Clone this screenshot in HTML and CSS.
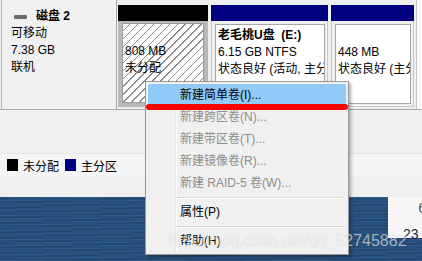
FILE: index.html
```html
<!DOCTYPE html>
<html lang="zh-CN">
<head>
    <meta charset="UTF-8">
    <title>磁盘管理</title>
    <link rel="stylesheet" href="styles.css">
</head>
<body>

    <div class="window">
        <div class="disk-row">
            <div class="disk-label">
                <div class="disk-title"><span class="disk-icon"></span><b>磁盘 2</b></div>
                <div>可移动</div>
                <div>7.38 GB</div>
                <div>联机</div>
            </div>
            <div class="partitions">
                <div class="part part-free selected">
                    <div class="part-head"></div>
                    <div class="part-body">
                        <div class="part-box">
                            <div>&nbsp;</div>
                            <div>808 MB</div>
                            <div>未分配</div>
                        </div>
                    </div>
                </div>
                <div class="part part-e">
                    <div class="part-head"></div>
                    <div class="part-body">
                        <div class="part-box">
                            <div><b>老毛桃U盘&nbsp; (E:)</b></div>
                            <div>6.15 GB NTFS</div>
                            <div>状态良好 (活动, 主分区)</div>
                        </div>
                    </div>
                </div>
                <div class="part part-3">
                    <div class="part-head"></div>
                    <div class="part-body">
                        <div class="part-box">
                            <div>&nbsp;</div>
                            <div>448 MB</div>
                            <div>状态良好 (主分区)</div>
                        </div>
                    </div>
                </div>
            </div>
            <div class="scroll"></div>
        </div>

        <div class="legend">
            <span class="swatch swatch-free"></span><span>未分配</span>
            <span class="swatch swatch-primary"></span><span>主分区</span>
        </div>
    </div>

    <div class="desktop">
        <div class="peek">
            <div class="peek-top">6</div>
            <div class="peek-date">23 -</div>
        </div>
    </div>

    <!-- context menu over the disk view -->
    <div class="menu">
        <div class="menu-item active">新建简单卷(I)...</div>
        <div class="menu-item disabled">新建跨区卷(N)...</div>
        <div class="menu-item disabled">新建带区卷(T)...</div>
        <div class="menu-item disabled">新建镜像卷(R)...</div>
        <div class="menu-item disabled">新建 RAID-5 卷(W)...</div>
        <div class="menu-sep"></div>
        <div class="menu-item">属性(P)</div>
        <div class="menu-sep"></div>
        <div class="menu-item">帮助(H)</div>
    </div>

    <div class="mark"></div>
    <div class="watermark">http://blog.csdn.net/qq_52745882</div>

</body>
</html>
```

FILE: styles.css
```css
body {
    margin: 0;
    width: 422px;
    height: 261px;
    overflow: hidden;
    position: relative;
    font-family: "Liberation Sans", "Noto Sans CJK SC", sans-serif;
    font-size: 12px;
    color: #000;
    background: #234d7c;
}

.window {
    height: 197px;
    background: #f0f0f0;
    display: flex;
    flex-direction: column;
}

.disk-row {
    height: 109px;
    display: flex;
    border-bottom: 1px solid #a9a9a9;
}

.disk-label {
    margin-left: 1px;
    width: 105px;
    padding: 8px 0 0 9px;
    border-left: 1px solid #b5b5b5;
    border-right: 1px solid #a9a9a9;
    line-height: 17px;
}

.disk-title {
    display: flex;
    align-items: center;
}

.disk-icon {
    width: 13px;
    height: 4px;
    margin: 0 9px 0 3px;
    background: #6b6b6b;
    border-radius: 1px;
}

.partitions {
    display: flex;
    gap: 3px;
    margin-left: 1px;
    padding-top: 5px;
}

.part {
    display: flex;
    flex-direction: column;
}

.part-free { width: 90px; }
.part-e { width: 117px; }
.part-3 { width: 83px; }

.part-head {
    height: 16px;
    background: #000080;
}

.part-free .part-head {
    background: #000;
}

.part-body {
    height: 86px;
    box-sizing: border-box;
    padding: 3px 2px 2px 3px;
    border: 1px solid #c8c8c8;
    border-top: none;
    background: #f0f0f0;
    display: flex;
}

.part-box {
    flex: 1;
    padding: 2px 0 0 2px;
    background: #fff;
    border: 1px solid #a6a6a6;
    line-height: 17px;
    white-space: nowrap;
    overflow: hidden;
}

.selected .part-body {
    padding: 2px 4px 4px 4px;
    border: none;
    background: #b9b9b9;
}

.part-free .part-box {
    border-color: #9c9c9c;
    background: repeating-linear-gradient(135deg, #fff 0 4.6px, #8c8c8c 4.6px 5.6px);
}

.scroll {
    margin-left: 2px;
    flex: 1;
    border-left: 1px solid #c4c4c4;
    background: #f7f7f7;
}

.legend {
    margin-top: 43px;
    height: 22px;
    padding-left: 7px;
    display: flex;
    align-items: center;
    background: #f5f5f5;
    border-top: 1px solid #e6e6e6;
}

.swatch {
    flex: none;
    width: 11px;
    height: 12px;
    margin-right: 5px;
}

.swatch-free {
    background: #000;
}

.swatch-primary {
    background: #000080;
    margin-left: 6px;
}

.desktop {
    height: 64px;
    display: flex;
    justify-content: flex-end;
    background:
        repeating-linear-gradient(0deg, rgba(255, 255, 255, 0.06) 0 1px, transparent 1px 3px),
        repeating-linear-gradient(178deg, rgba(0, 0, 0, 0.1) 0 2px, transparent 2px 5px),
        #254f7e;
}

.peek {
    width: 34px;
    height: 41px;
    background: #f7f7f7;
    font-family: "Liberation Sans", sans-serif;
    font-size: 14px;
    color: #1a2a44;
    display: flex;
    flex-direction: column;
}

.peek-top {
    text-align: right;
    margin-right: -4px;
    padding-top: 3px;
    color: #555;
}

.peek-date {
    margin-top: 10px;
    padding-left: 15px;
    white-space: nowrap;
}

.menu {
    position: absolute;
    left: 145px;
    top: 81px;
    width: 198px;
    padding: 2px;
    background: #f0f0f0;
    border: 1px solid #979797;
    box-shadow: 2px 2px 3px rgba(0, 0, 0, 0.3);
}

.menu::before {
    content: "";
    position: absolute;
    left: 29px;
    top: 2px;
    bottom: 2px;
    width: 1px;
    background: #e2e3e3;
    border-right: 1px solid #fff;
}

.menu-item {
    position: relative;
    height: 22px;
    line-height: 22px;
    padding-left: 32px;
    white-space: nowrap;
}

.menu-item.active {
    background: #91c9f7;
    border-radius: 2px;
}

.menu-item.disabled {
    color: #8d8d8d;
}

.menu-sep {
    position: relative;
    height: 7px;
    margin-left: 28px;
    margin-right: 2px;
}

.menu-sep::after {
    content: "";
    position: absolute;
    left: 0;
    right: 0;
    top: 3px;
    height: 1px;
    background: #d7d7d7;
    border-bottom: 1px solid #fff;
}

.mark {
    position: absolute;
    left: 146px;
    top: 104px;
    width: 202px;
    height: 6px;
    border-radius: 3px;
    background: #ff0000;
}

.watermark {
    position: absolute;
    left: 169px;
    top: 233px;
    font-family: "Liberation Sans", sans-serif;
    font-size: 16px;
    line-height: 16px;
    color: rgba(255, 255, 255, 0.6);
    text-shadow: 0 0 1px rgba(0, 0, 0, 0.15);
    white-space: nowrap;
}
```
